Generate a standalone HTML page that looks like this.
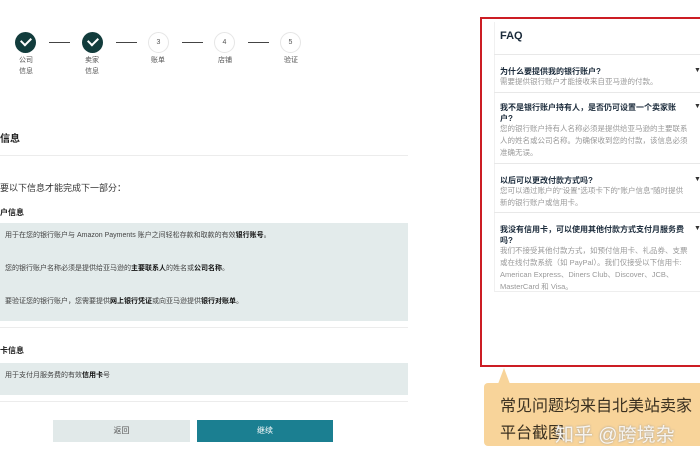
<!DOCTYPE html>
<html><head><meta charset="utf-8"><style>
*{margin:0;padding:0;box-sizing:border-box}
body{width:700px;height:470px;background:#fff;position:relative;overflow:hidden;font-family:"Liberation Sans","Noto Sans CJK SC",sans-serif;color:#222}
.a{position:absolute;white-space:nowrap}
.c{position:absolute;width:21px;height:21px;border-radius:50%;top:32px}
.done{background:#123c3c}
.done:after{content:"";position:absolute;left:6px;top:5px;width:8px;height:5px;border-left:2.5px solid #fff;border-bottom:2.5px solid #fff;transform:rotate(-45deg)}
.todo{border:1px solid #e6e6e6;font-size:7px;color:#555;text-align:center;line-height:19px}
.dash{position:absolute;top:42px;width:21px;height:1px;background:#444}
.lbl{position:absolute;font-size:7px;color:#555;line-height:11px;text-align:center;width:24px}
.box{position:absolute;left:0;width:408px;background:#e3ebeb}
.t{font-size:7px;color:#444}
.t b{color:#111}
.q{font-size:8px;font-weight:bold;color:#1a2a3a;line-height:11px}
.ans{font-size:7.5px;color:#999;line-height:12px}
.sep{position:absolute;left:494px;width:206px;height:1px;background:#e8e8e8}
.arr{position:absolute;left:694px;font-size:7px;color:#333}
</style></head><body>
<div class="c done" style="left:15px"></div>
<div class="dash" style="left:49px"></div>
<div class="c done" style="left:82px"></div>
<div class="dash" style="left:116px"></div>
<div class="c todo" style="left:148px">3</div>
<div class="dash" style="left:182px"></div>
<div class="c todo" style="left:214px">4</div>
<div class="dash" style="left:248px"></div>
<div class="c todo" style="left:280px">5</div>
<div class="lbl" style="left:14px;top:55px">公司<br>信息</div>
<div class="lbl" style="left:80px;top:55px">卖家<br>信息</div>
<div class="lbl" style="left:146px;top:55px">账单</div>
<div class="lbl" style="left:213px;top:55px">店铺</div>
<div class="lbl" style="left:279px;top:55px">验证</div>

<div class="a" style="left:0;top:130px;font-size:10px;font-weight:bold">信息</div>
<div class="a" style="left:0;top:155px;width:408px;height:1px;background:#ececec"></div>
<div class="a" style="left:0;top:181px;font-size:9px;color:#333">要以下信息才能完成下一部分：</div>
<div class="a" style="left:0;top:207px;font-size:8px;font-weight:bold">户信息</div>
<div class="box" style="top:223px;height:98px"></div>
<div class="a t" style="left:5px;top:230px">用于在您的银行账户与 Amazon Payments 账户之间轻松存款和取款的有效<b>银行账号</b>。</div>
<div class="a t" style="left:5px;top:263px">您的银行账户名称必须是提供给亚马逊的<b>主要联系人</b>的姓名或<b>公司名称</b>。</div>
<div class="a t" style="left:5px;top:296px">要验证您的银行账户，您需要提供<b>网上银行凭证</b>或向亚马逊提供<b>银行对账单</b>。</div>
<div class="a" style="left:0;top:327px;width:408px;height:1px;background:#ececec"></div>
<div class="a" style="left:0;top:345px;font-size:8px;font-weight:bold">卡信息</div>
<div class="box" style="top:363px;height:32px"></div>
<div class="a t" style="left:5px;top:370px">用于支付月服务费的有效<b>信用卡</b>号</div>
<div class="a" style="left:0;top:401px;width:408px;height:1px;background:#ececec"></div>
<div class="a" style="left:53px;top:420px;width:137px;height:22px;background:#e1e9e9;font-size:8px;color:#555;text-align:center;line-height:22px">返回</div>
<div class="a" style="left:197px;top:420px;width:136px;height:22px;background:#1b7f91;font-size:8px;color:#fff;text-align:center;line-height:22px">继续</div>

<div class="a" style="left:480px;top:17px;width:224px;height:350px;border:2px solid #cc1d24"></div>
<div class="a" style="left:494px;top:22px;width:206px;height:270px;border-left:1px solid #f0f0f0;border-bottom:1px solid #eee"></div>
<div class="a" style="left:500px;top:30px;font-size:11px;font-weight:bold;color:#1a2a3a">FAQ</div>
<div class="sep" style="top:54px"></div>
<div class="a q" style="left:500px;top:66px">为什么要提供我的银行账户?</div>
<div class="a ans" style="left:500px;top:76px">需要提供银行账户才能接收来自亚马逊的付款。</div>
<div class="arr" style="top:67px">▼</div>
<div class="sep" style="top:92px"></div>
<div class="a q" style="left:500px;top:102px">我不是银行账户持有人，是否仍可设置一个卖家账<br>户?</div>
<div class="a ans" style="left:500px;top:123px">您的银行账户持有人名称必须是提供给亚马逊的主要联系<br>人的姓名或公司名称。为确保收到您的付款，该信息必须<br>准确无误。</div>
<div class="arr" style="top:103px">▼</div>
<div class="sep" style="top:163px"></div>
<div class="a q" style="left:500px;top:175px">以后可以更改付款方式吗?</div>
<div class="a ans" style="left:500px;top:185px">您可以通过账户的"设置"选项卡下的"账户信息"随时提供<br>新的银行账户或信用卡。</div>
<div class="arr" style="top:176px">▼</div>
<div class="sep" style="top:212px"></div>
<div class="a q" style="left:500px;top:224px">我没有信用卡，可以使用其他付款方式支付月服务费<br>吗?</div>
<div class="a ans" style="left:500px;top:245px">我们不接受其他付款方式，如预付信用卡、礼品券、支票<br>或在线付款系统（如 PayPal）。我们仅接受以下信用卡:<br>American Express、Diners Club、Discover、JCB、<br>MasterCard 和 Visa。</div>
<div class="arr" style="top:225px">▼</div>

<div class="a" style="left:498px;top:368px;width:0;height:0;border-left:6px solid transparent;border-right:6px solid transparent;border-bottom:16px solid #f8d49a"></div>
<div class="a" style="left:484px;top:383px;width:220px;height:63px;background:#f8d49a;border-radius:4px"></div>
<div class="a" style="left:500px;top:393px;font-size:16px;color:#3a3020;line-height:27px">常见问题均来自北美站卖家<br>平台截图</div>
<div class="a" style="left:555px;top:420px;font-size:19px;color:rgba(255,255,255,0.85);text-shadow:0 0 2px #999">知乎 @跨境杂</div>
</body></html>
